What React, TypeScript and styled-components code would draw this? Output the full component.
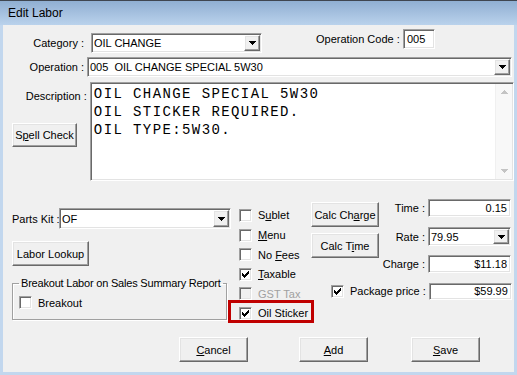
import React, { FC, ReactNode } from 'react';
import styled, { createGlobalStyle, css } from 'styled-components';

const GlobalStyle = createGlobalStyle`
    html, body {
        margin: 0;
        padding: 0;
        background: #f0f0f0;
    }
    body {
        font-family: "Liberation Sans", Arial, sans-serif;
        font-size: 11px;
        color: #000;
    }
`;

// classic win32 3d borders
const sunken = css`
    border-style: solid;
    border-width: 1px;
    border-color: #a0a0a0 #ffffff #ffffff #a0a0a0;
    box-shadow: inset 1px 1px 0 #696969, inset -1px -1px 0 #e3e3e3;
`;

const raised = css`
    border-style: solid;
    border-width: 1px;
    border-color: #ffffff #696969 #696969 #ffffff;
    box-shadow: inset -1px -1px 0 #a0a0a0, inset 1px 1px 0 #e3e3e3;
`;

const Window = styled.div`
    width: 517px;
    height: 375px;
    display: flex;
    flex-direction: column;
    background: #c2d7ee;
    overflow: hidden;
`;

const TitleBar = styled.div`
    height: 25px;
    box-sizing: border-box;
    border-top: 1px solid #3f4650;
    background: linear-gradient(#90afd2, #bad2ec);
    padding-left: 8px;
    display: flex;
    align-items: center;
    font-size: 12px;
    color: #000;
    flex: none;
`;

const Client = styled.div`
    flex: 1;
    margin: 0 3px 3px 3px;
    background: #f0f0f0;
    display: flex;
    flex-direction: column;
`;

const Row = styled.div<{ $top: number }>`
    display: flex;
    align-items: flex-start;
    margin-top: ${p => p.$top}px;
    flex: none;
`;

const Field = styled.div<{ $top?: number; $left?: number }>`
    display: flex;
    align-items: center;
    margin-top: ${p => p.$top ?? 0}px;
    margin-left: ${p => p.$left ?? 0}px;
`;

const Label = styled.span<{ $w?: number; $right?: boolean; $gap?: number }>`
    width: ${p => (p.$w ? `${p.$w}px` : 'auto')};
    text-align: ${p => (p.$right ? 'right' : 'left')};
    margin-right: ${p => p.$gap ?? 0}px;
    white-space: nowrap;
    flex: none;
`;

const TextInput = styled.input<{ $w: number; $h: number; $right?: boolean }>`
    ${sunken};
    box-sizing: border-box;
    width: ${p => p.$w}px;
    height: ${p => p.$h}px;
    margin: 0;
    padding: 0 3px;
    background: #fff;
    font: 11px "Liberation Sans", Arial, sans-serif;
    color: #000;
    text-align: ${p => (p.$right ? 'right' : 'left')};
    outline: none;
    flex: none;
`;

const ComboBox = styled.div<{ $w: number; $h: number }>`
    ${sunken};
    box-sizing: border-box;
    width: ${p => p.$w}px;
    height: ${p => p.$h}px;
    padding: 1px;
    background: #fff;
    display: flex;
    flex: none;
`;

const ComboText = styled.span`
    flex: 1;
    padding-left: 1px;
    display: flex;
    align-items: center;
    white-space: nowrap;
    overflow: hidden;
`;

const DropButton = styled.span`
    ${raised};
    box-sizing: border-box;
    width: 16px;
    flex: none;
    background: #f0f0f0;
    display: flex;
    align-items: center;
    justify-content: center;
`;

const PushButton = styled.button<{ $w: number; $h: number; $left?: number; $top?: number }>`
    ${raised};
    box-sizing: border-box;
    width: ${p => p.$w}px;
    height: ${p => p.$h}px;
    margin: ${p => p.$top ?? 0}px 0 0 ${p => p.$left ?? 0}px;
    padding: 0;
    background: #f0f0f0;
    font: 11px "Liberation Sans", Arial, sans-serif;
    color: #000;
    flex: none;
`;

const DescriptionRow = styled.div`
    display: flex;
    margin-top: 5px;
    flex: none;
`;

const DescriptionSide = styled.div`
    width: 84px;
    display: flex;
    flex-direction: column;
`;

const DescriptionLabel = styled.span`
    text-align: right;
    margin-top: 8px;
    line-height: 13px;
`;

const Memo = styled.div`
    ${sunken};
    box-sizing: border-box;
    width: 425px;
    height: 99px;
    margin-left: 3px;
    padding: 1px;
    background: #fff;
    display: flex;
`;

const MemoText = styled.div`
    flex: 1;
    padding: 1px 0 0 2px;
    font-family: "Liberation Mono", "Courier New", monospace;
    font-size: 14px;
    letter-spacing: 1.4px;
    line-height: 18px;
    white-space: pre;
`;

const ScrollTrack = styled.div`
    width: 17px;
    background: #f8f8f8;
    border-left: 1px solid #f0f0f0;
    display: flex;
    flex-direction: column;
    justify-content: space-between;
    align-items: center;
    padding: 6px 0 6px;
    box-sizing: border-box;
`;

const Lower = styled.div`
    display: flex;
    flex: none;
`;

const LeftCol = styled.div`
    width: 228px;
    box-sizing: border-box;
    padding-left: 9px;
    display: flex;
    flex-direction: column;
`;

const GroupBox = styled.fieldset`
    box-sizing: border-box;
    width: 215px;
    height: 43px;
    margin: 11px 0 0 0;
    padding: 0 0 0 6px;
    border: 1px solid #a0a0a0;
    box-shadow: inset 1px 1px 0 #fff, 1px 1px 0 #fff;
    min-width: 0;
`;

const GroupLegend = styled.legend`
    margin-left: 0;
    padding: 0 2px;
    line-height: 13px;
    white-space: nowrap;
    letter-spacing: -0.2px;
`;

const CheckCol = styled.div`
    width: 80px;
    padding-top: 24.7px;
    display: flex;
    flex-direction: column;
    flex: none;
`;

const CheckRow = styled.div<{ $highlight?: boolean; $disabled?: boolean }>`
    display: flex;
    align-items: center;
    box-sizing: border-box;
    height: 19.6px;
    padding-left: 8px;
    color: ${p => (p.$disabled ? '#a0a0a0' : '#000')};
    white-space: nowrap;
    ${p =>
        p.$highlight &&
        css`
            height: 23px;
            margin: -3.7px -3px 0 -3px;
            padding: 4px 0 0 8px;
            border: 3px solid #c00000;
        `}
`;

const Box = styled.span<{ $disabled?: boolean }>`
    ${sunken};
    box-sizing: border-box;
    width: 13px;
    height: 13px;
    margin-right: 6px;
    background: ${p => (p.$disabled ? '#f0f0f0' : '#fff')};
    display: inline-flex;
    align-items: center;
    justify-content: center;
    flex: none;
`;

const RightBlock = styled.div`
    width: 203px;
    display: flex;
    flex-direction: column;
`;

const RightTop = styled.div`
    display: flex;
`;

const CalcCol = styled.div`
    width: 68px;
    padding-top: 21px;
    display: flex;
    flex-direction: column;
    gap: 6px;
    flex: none;
`;

const FieldsCol = styled.div`
    flex: 1;
    padding: 18px 3px 0 0;
    display: flex;
    flex-direction: column;
`;

const PackageRow = styled.div`
    display: flex;
    align-items: center;
    height: 18px;
    margin-top: 9px;
    padding: 0 3px 0 20px;
`;

const PackageLabel = styled.span`
    flex: 1;
    text-align: right;
    margin-right: 3px;
    white-space: nowrap;
`;

const ButtonRow = styled.div`
    display: flex;
    margin-top: auto;
    padding: 0 0 10px 176px;
`;

const CheckMark: FC<{ color?: string }> = ({ color = '#000' }) => (
    <svg width="7" height="7" viewBox="0 0 7 7" shapeRendering="crispEdges">
        <path
            d="M0 2H1V3H2V4H3V3H4V2H5V1H6V0H7V3H6V4H5V5H4V6H3V7H2V6H1V5H0Z"
            fill={color}
        />
    </svg>
);

const DownArrow: FC<{ color?: string }> = ({ color = '#000' }) => (
    <svg width="7" height="4" viewBox="0 0 7 4" shapeRendering="crispEdges">
        <path d="M0 0H7V1H6V2H5V3H4V4H3V3H2V2H1V1H0Z" fill={color} />
    </svg>
);

const UpArrow: FC<{ color?: string }> = ({ color = '#000' }) => (
    <svg width="7" height="4" viewBox="0 0 7 4" shapeRendering="crispEdges">
        <path d="M0 4H7V3H6V2H5V1H4V0H3V1H2V2H1V3H0Z" fill={color} />
    </svg>
);

const Combo: FC<{ w: number; h: number; value: string }> = ({ w, h, value }) => (
    <ComboBox $w={w} $h={h}>
        <ComboText>{value}</ComboText>
        <DropButton><DownArrow /></DropButton>
    </ComboBox>
);

const Check: FC<{ checked?: boolean; disabled?: boolean; highlight?: boolean; children: ReactNode }> = ({
    checked,
    disabled,
    highlight,
    children,
}) => (
    <CheckRow $highlight={highlight} $disabled={disabled}>
        <Box $disabled={disabled}>{checked && <CheckMark />}</Box>
        <span>{children}</span>
    </CheckRow>
);

const MoneyField: FC<{ label: string; value: string; top: number }> = ({ label, value, top }) => (
    <Field $top={top}>
        <Label $w={46} $right $gap={3}>{label}</Label>
        <TextInput $w={83} $h={18} $right readOnly value={value} />
    </Field>
);

const memo = 'OIL CHANGE SPECIAL 5W30\nOIL STICKER REQUIRED.\nOIL TYPE:5W30.';

export default function App() {
    return (
        <>
            <GlobalStyle />
            <Window>
                <TitleBar>Edit Labor</TitleBar>
                <Client>
                    <Row $top={4}>
                        <Field $top={4}>
                            <Label $w={81} $right $gap={7}>Category :</Label>
                            <Combo w={171} h={20} value="OIL CHANGE" />
                        </Field>
                        <Field $left={54}>
                            <Label $w={82} $gap={5}>Operation Code :</Label>
                            <TextInput $w={32} $h={20} readOnly value="005" />
                        </Field>
                    </Row>
                    <Row $top={4}>
                        <Field>
                            <Label $w={81} $right $gap={3}>Operation :</Label>
                            <Combo w={425} h={20} value={'005\u00a0\u00a0OIL CHANGE SPECIAL 5W30'} />
                        </Field>
                    </Row>
                    <DescriptionRow>
                        <DescriptionSide>
                            <DescriptionLabel>Description :</DescriptionLabel>
                            <PushButton $w={65} $h={24} $left={9} $top={20}>
                                S<u>p</u>ell Check
                            </PushButton>
                        </DescriptionSide>
                        <Memo>
                            <MemoText>{memo}</MemoText>
                            <ScrollTrack>
                                <UpArrow color="#c4c4c4" />
                                <DownArrow color="#c4c4c4" />
                            </ScrollTrack>
                        </Memo>
                    </DescriptionRow>
                    <Lower>
                        <LeftCol>
                            <Field $top={27}>
                                <Label $w={47}>Parts Kit :</Label>
                                <Combo w={172} h={21} value="OF" />
                            </Field>
                            <PushButton $w={77} $h={25} $top={12}>Labor Lookup</PushButton>
                            <GroupBox>
                                <GroupLegend>Breakout Labor on Sales Summary Report</GroupLegend>
                                <Field $top={6}>
                                    <Box />
                                    <span>Breakout</span>
                                </Field>
                            </GroupBox>
                        </LeftCol>
                        <CheckCol>
                            <Check>S<u>u</u>blet</Check>
                            <Check><u>M</u>enu</Check>
                            <Check>No <u>F</u>ees</Check>
                            <Check checked><u>T</u>axable</Check>
                            <Check disabled>GST Tax</Check>
                            <Check checked highlight>Oil Sticker</Check>
                        </CheckCol>
                        <RightBlock>
                            <RightTop>
                                <CalcCol>
                                    <PushButton $w={68} $h={25}>Calc Ch<u>a</u>rge</PushButton>
                                    <PushButton $w={68} $h={25}>Calc T<u>i</u>me</PushButton>
                                </CalcCol>
                                <FieldsCol>
                                    <MoneyField label="Time :" value="0.15" top={0} />
                                    <Field $top={10}>
                                        <Label $w={46} $right $gap={3}>Rate :</Label>
                                        <Combo w={83} h={19} value="79.95" />
                                    </Field>
                                    <MoneyField label="Charge :" value="$11.18" top={9} />
                                </FieldsCol>
                            </RightTop>
                            <PackageRow>
                                <Box><CheckMark /></Box>
                                <PackageLabel>Package price :</PackageLabel>
                                <TextInput $w={83} $h={17} $right readOnly value="$59.99" />
                            </PackageRow>
                        </RightBlock>
                    </Lower>
                    <ButtonRow>
                        <PushButton $w={69} $h={25}><u>C</u>ancel</PushButton>
                        <PushButton $w={69} $h={25} $left={51}><u>A</u>dd</PushButton>
                        <PushButton $w={69} $h={25} $left={43}><u>S</u>ave</PushButton>
                    </ButtonRow>
                </Client>
            </Window>
        </>
    );
}
